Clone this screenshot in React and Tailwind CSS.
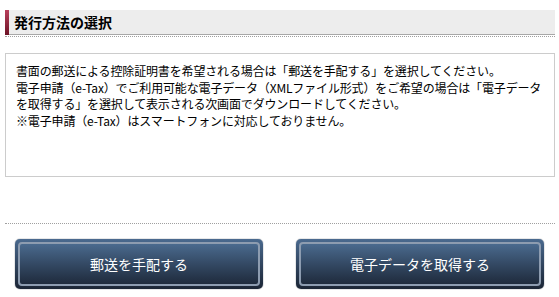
import React from "react";

const jp = { fontFamily: '"Noto Sans CJK JP", "Noto Sans", sans-serif' };

function Btn({ children }) {
  return (
    <button
      className="w-[248px] h-[50px] rounded-[5px] p-[3px] bg-gradient-to-b from-[#4a6a8f] to-[#1b2535] shadow-[0_0_1px_#0a1420]"
      style={jp}
    >
      <div className="w-full h-full rounded-[4px] border-2 border-[#8d9cb0] bg-gradient-to-b from-[#4a6a8e] to-[#1f2b3d] flex items-center justify-center text-white text-[14px] leading-none">
        {children}
      </div>
    </button>
  );
}

export default function App() {
  return (
    <div className="w-[559px] h-[297px] bg-white pt-[10px] overflow-hidden" style={jp}>
      <div className="ml-[5px] w-[550px]">
        <div className="h-[25px] flex bg-[#ededed] border-b border-[#a8a8a8]">
          <div className="w-[4px] h-[25px] bg-gradient-to-b from-[#b8405c] to-[#6e1226]" />
          <div className="pl-[5px] flex items-center text-[14px] font-bold text-black leading-none">
            発行方法の選択
          </div>
        </div>
        <div className="mt-[1px] border-b border-dotted border-[#a0a0a0]" />
        <div className="mt-[16px] h-[124px] border border-[#cccccc] pl-[10px] pr-[4px] pt-[9px] text-[12px] leading-[16.5px] text-black whitespace-nowrap tracking-[-0.15px]">
          <div>書面の郵送による控除証明書を希望される場合は「郵送を手配する」を選択してください。</div>
          <div>電子申請（e-Tax）でご利用可能な電子データ（XMLファイル形式）をご希望の場合は「電子データ</div>
          <div>を取得する」を選択して表示される次画面でダウンロードしてください。</div>
          <div>※電子申請（e-Tax）はスマートフォンに対応しておりません。</div>
        </div>
        <div className="mt-[46px] border-b border-dotted border-[#a0a0a0]" />
        <div className="mt-[15px] ml-[10px] flex gap-[33px]">
          <Btn>郵送を手配する</Btn>
          <Btn>電子データを取得する</Btn>
        </div>
      </div>
    </div>
  );
}
